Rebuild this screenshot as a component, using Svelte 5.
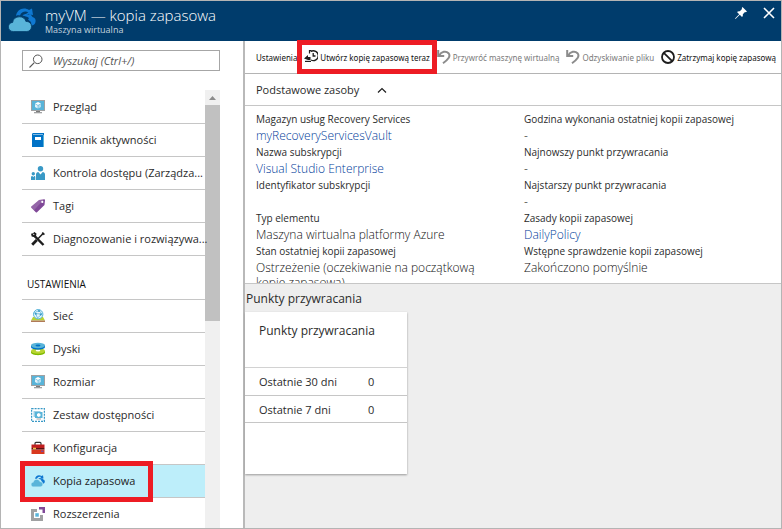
<script>
  const general = [
    { icon: 'monitor', label: 'Przegląd' },
    { icon: 'book', label: 'Dziennik aktywności' },
    { icon: 'people', label: 'Kontrola dostępu (Zarządza...' },
    { icon: 'tag', label: 'Tagi' },
    { icon: 'tools', label: 'Diagnozowanie i rozwiązywa...' },
  ];
  const settings = [
    { icon: 'network', label: 'Sieć' },
    { icon: 'disks', label: 'Dyski' },
    { icon: 'monitor', label: 'Rozmiar' },
    { icon: 'availability', label: 'Zestaw dostępności' },
    { icon: 'toolbox', label: 'Konfiguracja' },
    { icon: 'cloud', label: 'Kopia zapasowa', active: true },
    { icon: 'extensions', label: 'Rozszerzenia' },
  ];
  const commands = [
    { label: 'Ustawienia' },
    { icon: 'backup', label: 'Utwórz kopię zapasową teraz', marked: true },
    { icon: 'undo', label: 'Przywróć maszynę wirtualną', disabled: true },
    { icon: 'undo', label: 'Odzyskiwanie pliku', disabled: true },
    { icon: 'stop', label: 'Zatrzymaj kopię zapasową' },
  ];
  const left = [
    { label: 'Magazyn usług Recovery Services', value: 'myRecoveryServicesVault', link: true },
    { label: 'Nazwa subskrypcji', value: 'Visual Studio Enterprise', link: true },
    { label: 'Identyfikator subskrypcji', value: '' },
    { label: 'Typ elementu', value: 'Maszyna wirtualna platformy Azure' },
    { label: 'Stan ostatniej kopii zapasowej', value: 'Ostrzeżenie (oczekiwanie na początkową kopię zapasową)' },
  ];
  const right = [
    { label: 'Godzina wykonania ostatniej kopii zapasowej', value: '-' },
    { label: 'Najnowszy punkt przywracania', value: '-' },
    { label: 'Najstarszy punkt przywracania', value: '-' },
    { label: 'Zasady kopii zapasowej', value: 'DailyPolicy', link: true },
    { label: 'Wstępne sprawdzenie kopii zapasowej', value: 'Zakończono pomyślnie' },
  ];
  const points = [
    { label: 'Ostatnie 30 dni', count: 0 },
    { label: 'Ostatnie 7 dni', count: 0 },
  ];
</script>

{#snippet icon(name)}
  {#if name === 'cloud'}
    <svg viewBox="0 0 28 24" aria-hidden="true">
      <path fill="#0f78d1" d="M8 8C8.500 3.500 12 .5 16 .5c2 0 3.500.5 5 1.500l3-1.500 1 6.500-7-1 2.300-1.700C17 2.500 13 4.500 12 7.500 9.500 7 8.500 7.500 8 8z" />
      <path fill="#0f78d1" d="M14.500 7.500c2-2 5-2 6.500-.5l1-1.500L24.500 9c2.500.5 3.500 2.500 3 5-.4 2-2 3.500-4 3.500L23 14l-3-2.500 1-1.500c-2-1.500-4-2-6.500-2.500z" />
      <path fill="#59b4d9" stroke="currentColor" stroke-width=".8" d="M5.500 23.600C2.500 23.600.4 21.500.4 18.900c0-2.600 1.700-4.400 4.300-4.500C5 11 7.600 8.800 11.500 8.800c3.300 0 5.700 2 6.400 4.600 3.300-.2 5.600 2.100 5.600 5.100s-2.200 5.100-5.200 5.100z" />
    </svg>
  {:else if name === 'monitor'}
    <svg viewBox="0 0 14 14" aria-hidden="true">
      <path fill="#a0a1a2" d="M0 0h14v11H0z" /><path fill="#59b4d9" d="M1 1h12v9H1z" />
      <path fill="#7a7a7a" d="M5 11h4v1H5z" /><path fill="#a0a1a2" d="M3 12h8v1.300H3z" />
      <path fill="#fff" d="M7 2l3 1.500L7 5 4 3.500z" /><path fill="#e2f2fa" d="M4 4l2.700 1.400v3.200L4 7z" /><path fill="#b8def0" d="M10 4L7.300 5.400v3.200L10 7z" />
    </svg>
  {:else if name === 'book'}
    <svg viewBox="0 0 14 14" aria-hidden="true">
      <path fill="#0072c6" d="M2.500 0H13v14H1V1.500C1 .5 1.500 0 2.500 0z" /><path fill="#7fb9e3" d="M2 1h10v1H2z" />
      <path fill="#fff" d="M4 4h6v3H4z" /><path fill="#59b4d9" d="M12 2h1v12h-1z" />
    </svg>
  {:else if name === 'people'}
    <svg viewBox="0 0 14 14" aria-hidden="true" fill="#3999c6">
      <circle cx="9.500" cy="2.700" r="2.700" /><path d="M5 14V8.500C5 7 6 6 7.300 6L9.500 8.500 11.700 6C13 6 14 7 14 8.500V14z" />
      <circle cx="2.300" cy="7.700" r="1.700" /><path d="M0 14v-2.500C0 10.500.5 10 1.300 10l1 1 1-1c.6 0 1 .4 1 1V14z" />
    </svg>
  {:else if name === 'tag'}
    <svg viewBox="0 0 14 14" aria-hidden="true">
      <path fill="#804998" d="M8 1l5-.7c.6 0 1 .4 1 1L13.500 6 6 13.300c-.4.400-.8.400-1.200 0L.3 8.700c-.4-.4-.4-.8 0-1.200z" />
      <path fill="#fff" opacity=".16" d="M8 1l5-.7L3 11.300.3 8.700c-.4-.4-.4-.8 0-1.200z" /><circle cx="11.300" cy="2.900" r="1.100" fill="#fff" />
    </svg>
  {:else if name === 'tools'}
    <svg viewBox="0 0 14 14" aria-hidden="true" fill="none" stroke="#1e1e1e">
      <path stroke-width="2.400" d="M3.700 4.200L12.500 13" /><path stroke-width="2" d="M1 1.500l.5 2.200L4 4.300 4.400 2 2.600.7" />
      <path stroke-width="1.500" d="M12.600 1L6.500 7.300" /><path stroke-width="2.800" d="M5.800 8L1.200 12.800" /><path stroke-width="1.600" d="M11.200.7l2.200 2" />
    </svg>
  {:else if name === 'network'}
    <svg viewBox="0 0 14 14" aria-hidden="true">
      <path fill="#b8d432" d="M2 8h10l2 3.500H0z" /><path fill="#b07a58" d="M0 11.500h14V13H0z" />
      <circle cx="7.200" cy="5.200" r="4.700" fill="#e9f6fb" stroke="#59b4d9" />
      <path fill="none" stroke="#59b4d9" stroke-width=".8" d="M3 4l5-2.500L11 5 6.500 9 4.700 4.700 11 5" />
      <circle cx="8" cy="2" r="1" fill="#3999c6" /><circle cx="4.700" cy="4.700" r="1" fill="#3999c6" /><circle cx="9.700" cy="5.500" r="1" fill="#3999c6" />
    </svg>
  {:else if name === 'disks'}
    <svg viewBox="0 0 14 14" aria-hidden="true">
      <path fill="#7fba00" d="M0 9h14v1.500C14 14 0 14 0 10.500z" /><ellipse cx="7" cy="9" rx="7" ry="2.700" fill="#b8d432" /><ellipse cx="7" cy="8.500" rx="2.300" ry=".9" fill="#fff" />
      <path fill="#0072c6" d="M0 3.500h14V5C14 8.500 0 8.500 0 5z" /><ellipse cx="7" cy="3.500" rx="7" ry="2.700" fill="#59b4d9" /><ellipse cx="7" cy="3.500" rx="2.500" ry="1" fill="#0072c6" />
    </svg>
  {:else if name === 'availability'}
    <svg viewBox="0 0 14 14" aria-hidden="true">
      <path fill="none" stroke="#3999c6" stroke-width="1.200" stroke-dasharray="2 1" d="M.6.6h12.800v12.800H.6z" />
      <path fill="#9bcfe6" d="M2.500 3h7v6h-7z" /><path fill="#59b4d9" d="M4 4h7.500v6H4z" /><path fill="#a0a1a2" d="M5.500 10.500H10v1H5.500z" />
      <path fill="#fff" d="M7.700 5l1.800 1v2l-1.800 1L6 8V6z" />
    </svg>
  {:else if name === 'toolbox'}
    <svg viewBox="0 0 14 14" aria-hidden="true">
      <path fill="none" stroke="#333" stroke-width="1.200" d="M4 4V2.500c0-.8.300-1.200 1-1.200h4c.7 0 1 .4 1 1.200V4" />
      <path fill="#bf1e1e" d="M.5 3.500h13V7H.5z" /><path fill="#d9381e" d="M.5 8.500h13V13H.5z" /><path fill="#5c1010" d="M.5 7h13v1.500H.5z" />
      <path fill="#f2c14e" d="M2 6.700h3v1.600H2z" /><path fill="#804998" d="M10 9.500h2.500V11H10z" />
    </svg>
  {:else if name === 'extensions'}
    <svg viewBox="0 0 14 14" aria-hidden="true">
      <path fill="#a0a1a2" d="M0 2h6v3H3v6h6V8h3v6H0z" /><path fill="#59b4d9" d="M4.300 6.200h3.500v3.500H4.300z" />
      <path fill="#804998" d="M8 0h6v6h-2.500V2.500H8z" />
    </svg>
  {:else if name === 'backup'}
    <svg viewBox="0 0 14 14" aria-hidden="true" fill="none" stroke="#1e1e1e">
      <path stroke-width="1.300" d="M6.800 1.500A4.900 4.900 0 1 1 7 10M9.200 3v3h2.300" /><path stroke-width="1.200" d="M7.500.6h-2v3" />
      <path fill="#1e1e1e" stroke="none" d="M0 8.500L4 5v2h2.500v3H4z" /><path stroke-width="1.200" d="M1 11.400h6" />
    </svg>
  {:else if name === 'undo'}
    <svg viewBox="0 0 14 14" aria-hidden="true" fill="none" stroke="#8c8c8c" stroke-width="2">
      <path d="M1.200 0v6h6" /><path d="M2 5.500C4.500 1.500 9 .5 11.500 3.200c2.600 3-.5 6.300-5.500 10" />
    </svg>
  {:else if name === 'stop'}
    <svg viewBox="0 0 14 14" aria-hidden="true" fill="none" stroke="#1e1e1e" stroke-width="1.800"><circle cx="7" cy="7" r="6" /><path d="M2.800 2.800l8.400 8.400" /></svg>
  {/if}
{/snippet}

{#snippet navList(items)}
  <ul>
    {#each items as item}
      <li>
        <a href="#top" class:active={item.active} aria-current={item.active ? 'page' : undefined}>
          {@render icon(item.icon)}<span>{item.label}</span>
        </a>
      </li>
    {/each}
  </ul>
{/snippet}

{#snippet properties(items)}
  <dl>
    {#each items as item}
      <div>
        <dt>{item.label}</dt>
        <dd>{#if item.link}<a href="#top">{item.value}</a>{:else}{item.value}{/if}</dd>
      </div>
    {/each}
  </dl>
{/snippet}

<div class="blade">
  <header>
    <span class="logo">{@render icon('cloud')}</span>
    <div class="titles">
      <h1>myVM — kopia zapasowa</h1>
      <p>Maszyna wirtualna</p>
    </div>
    <button aria-label="Przypnij">
      <svg viewBox="0 0 12 12" aria-hidden="true"><path fill="#fff" d="M7.500 0L12 4.500l-1.200.7-.8-.2-2.200 2.200c.3 1.200 0 2-.8 2.800L4.800 7.800.5 12 0 11.500l4.200-4.300L2 5c.8-.8 1.800-1 2.800-.8L7 2l-.2-.9z" /></svg>
    </button>
    <button aria-label="Zamknij">
      <svg viewBox="0 0 12 12" aria-hidden="true"><path fill="none" stroke="#fff" stroke-width="1.600" d="M1 1l10 10M11 1L1 11" /></svg>
    </button>
  </header>

  <div class="body">
    <aside>
      <label class="search">
        <svg viewBox="0 0 14 14" aria-hidden="true"><path fill="none" stroke="#555" stroke-width="1.100" d="M5.300 8.700L.5 13.500" /><circle cx="8.700" cy="5.300" r="4.300" fill="none" stroke="#555" /></svg>
        <input type="text" placeholder="Wyszukaj (Ctrl+/)" aria-label="Wyszukaj" />
      </label>
      <div class="menu">
        <nav>
          {@render navList(general)}
          <h2>USTAWIENIA</h2>
          {@render navList(settings)}
        </nav>
        <div class="scrollbar" aria-hidden="true">
          <svg viewBox="0 0 15 15"><path fill="#8c8c8c" d="M4 10l3.500-4L11 10z" /></svg>
          <div class="track"><div class="thumb"></div></div>
        </div>
      </div>
    </aside>

    <main>
      <div class="toolbar">
        {#each commands as command}
          <button disabled={command.disabled} class:marked={command.marked}>
            {#if command.icon}{@render icon(command.icon)}{/if}<span>{command.label}</span>
          </button>
        {/each}
      </div>
      <button class="essentials" aria-expanded="true">
        <span>Podstawowe zasoby</span>
        <svg viewBox="0 0 10 6" aria-hidden="true"><path fill="none" stroke="#1e1e1e" stroke-width="1.200" d="M1 5.500l4-4 4 4" /></svg>
      </button>
      <section class="details">
        {@render properties(left)}
        {@render properties(right)}
      </section>
      <section class="points">
        <h2>Punkty przywracania</h2>
        <div class="card">
          <h3>Punkty przywracania</h3>
          <table>
            <tbody>
              {#each points as point}
                <tr><th scope="row">{point.label}</th><td>{point.count}</td></tr>
              {/each}
            </tbody>
          </table>
        </div>
      </section>
    </main>
  </div>
</div>

<style>
  :global(body) { margin: 0; }
  * { box-sizing: border-box; }
  h1, h2, h3, p, ul, dl, dd { margin: 0; padding: 0; font-weight: 400; }
  ul { list-style: none; }
  svg { display: block; flex: none; }
  a { color: inherit; text-decoration: none; }
  button { padding: 0; border: 0; background: none; color: inherit; font: inherit; }

  .blade {
    display: flex;
    flex-direction: column;
    height: 100vh;
    overflow: hidden;
    border: 1px solid #b4b4b4;
    background: #fff;
    color: #2b2b2b;
    font: 11px/16px "Open Sans", "Noto Sans", sans-serif;
  }

  header {
    display: flex;
    flex: none;
    align-items: flex-start;
    gap: 16px;
    height: 40px;
    padding: 6px 6px 0 7px;
    background: #003c6c;
    color: #fff;
  }
  .logo { color: #003c6c; }
  .logo svg { width: 28px; height: 26px; }
  .titles { flex: 1; margin-left: -7px; }
  h1 { font-size: 15px; line-height: 16px; font-weight: 350; }
  header p { color: #c3d2de; font-size: 9px; line-height: 14px; }
  header button svg { width: 12px; height: 12px; }

  .body { display: flex; flex: 1; min-height: 0; }
  aside {
    display: flex;
    flex: none;
    flex-direction: column;
    width: 244px;
    padding: 9px 23px 0 21px;
    border-right: 2px solid #b9b9b9;
  }
  .search {
    display: flex;
    flex: none;
    align-items: center;
    gap: 10px;
    height: 21px;
    margin-bottom: 19px;
    padding: 0 6px;
    border: 1px solid #a6a6a6;
  }
  .search svg { width: 14px; height: 14px; }
  .search input {
    flex: 1;
    min-width: 0;
    padding: 0;
    border: 0;
    outline: 0;
    background: none;
    font: italic 11px/16px "Open Sans", "Noto Sans", sans-serif;
  }
  .search input::placeholder { color: #555; opacity: 1; }

  .menu { display: flex; flex: 1; min-height: 0; }
  nav { flex: 1; min-width: 0; padding-top: 1px; }
  li { border-bottom: 1px solid #c6c6c6; }
  nav a {
    position: relative;
    display: flex;
    align-items: center;
    gap: 8px;
    height: 32px;
    padding-left: 9px;
    white-space: nowrap;
  }
  nav a svg { width: 14px; height: 14px; }
  nav a.active { background: #bdeefa; color: #222; }
  nav a.active svg { color: #bdeefa; }
  nav a.active::after {
    content: "";
    position: absolute;
    inset: -4px 52px -5px -2px;
    border: 5px solid #ed1c24;
    z-index: 1;
  }
  nav h2 {
    height: 44px;
    padding: 20px 0 0 5px;
    border-bottom: 1px solid #c6c6c6;
    color: #111;
    font-size: 10px;
  }
  .scrollbar { display: flex; flex: none; flex-direction: column; width: 15px; background: #f0f0f0; }
  .track { flex: 1; }
  .thumb { height: 51%; background: #c1c1c1; }

  main { display: flex; flex: 1; flex-direction: column; min-width: 0; background: #eee; }
  .toolbar {
    display: flex;
    flex: none;
    align-items: center;
    justify-content: space-between;
    height: 33px;
    padding: 0 5px 0 11px;
    border-bottom: 1px solid #b4b4b4;
    background: #fff;
    color: #111;
    font-family: "Noto Sans", "Open Sans", sans-serif;
    font-size: 8px;
    white-space: nowrap;
  }
  .toolbar button { position: relative; display: flex; align-items: center; gap: 2px; }
  .toolbar button:disabled { color: #7a7a7a; }
  .toolbar svg { width: 14px; height: 14px; }
  .toolbar span { padding-top: 2px; }
  .toolbar .marked::after {
    content: "";
    position: absolute;
    inset: -8px -7px;
    border: 5px solid #ed1c24;
    z-index: 1;
  }
  .essentials {
    display: flex;
    flex: none;
    align-items: center;
    gap: 18px;
    height: 32px;
    padding-left: 11px;
    border-bottom: 1px solid #c6c6c6;
    background: #fff;
  }
  .essentials span { padding-top: 1px; }
  .essentials svg { width: 10px; height: 6px; }
  .details {
    display: grid;
    flex: none;
    grid-template-columns: 1fr 1fr;
    max-height: 178px;
    padding-top: 5px;
    overflow: hidden;
    border-bottom: 1px solid #c6c6c6;
    background: #fff;
  }
  dl { padding: 0 20px 0 11px; }
  dl div { min-height: 33px; }
  dt { font-size: 10px; line-height: 17px; }
  dd { color: #111; font-size: 12px; line-height: 15px; font-weight: 350; }
  dl a { color: #003c9a; }

  .points h2 { padding: 2px 0 0 1px; font-size: 12px; line-height: 26px; }
  .card {
    width: 162px;
    height: 162px;
    background: #fff;
    box-shadow: 0 1px 2px #999;
  }
  h3 { height: 56px; padding: 11px 0 0 14px; border-bottom: 1px solid #d2d2d2; font-size: 12px; }
  table { width: 100%; border-collapse: collapse; font-size: 11px; }
  tr { border-bottom: 1px solid #c6c6c6; }
  th, td { height: 27px; padding: 2px 0 0; font-weight: 400; text-align: left; }
  th { width: 123px; padding-left: 14px; }
</style>
